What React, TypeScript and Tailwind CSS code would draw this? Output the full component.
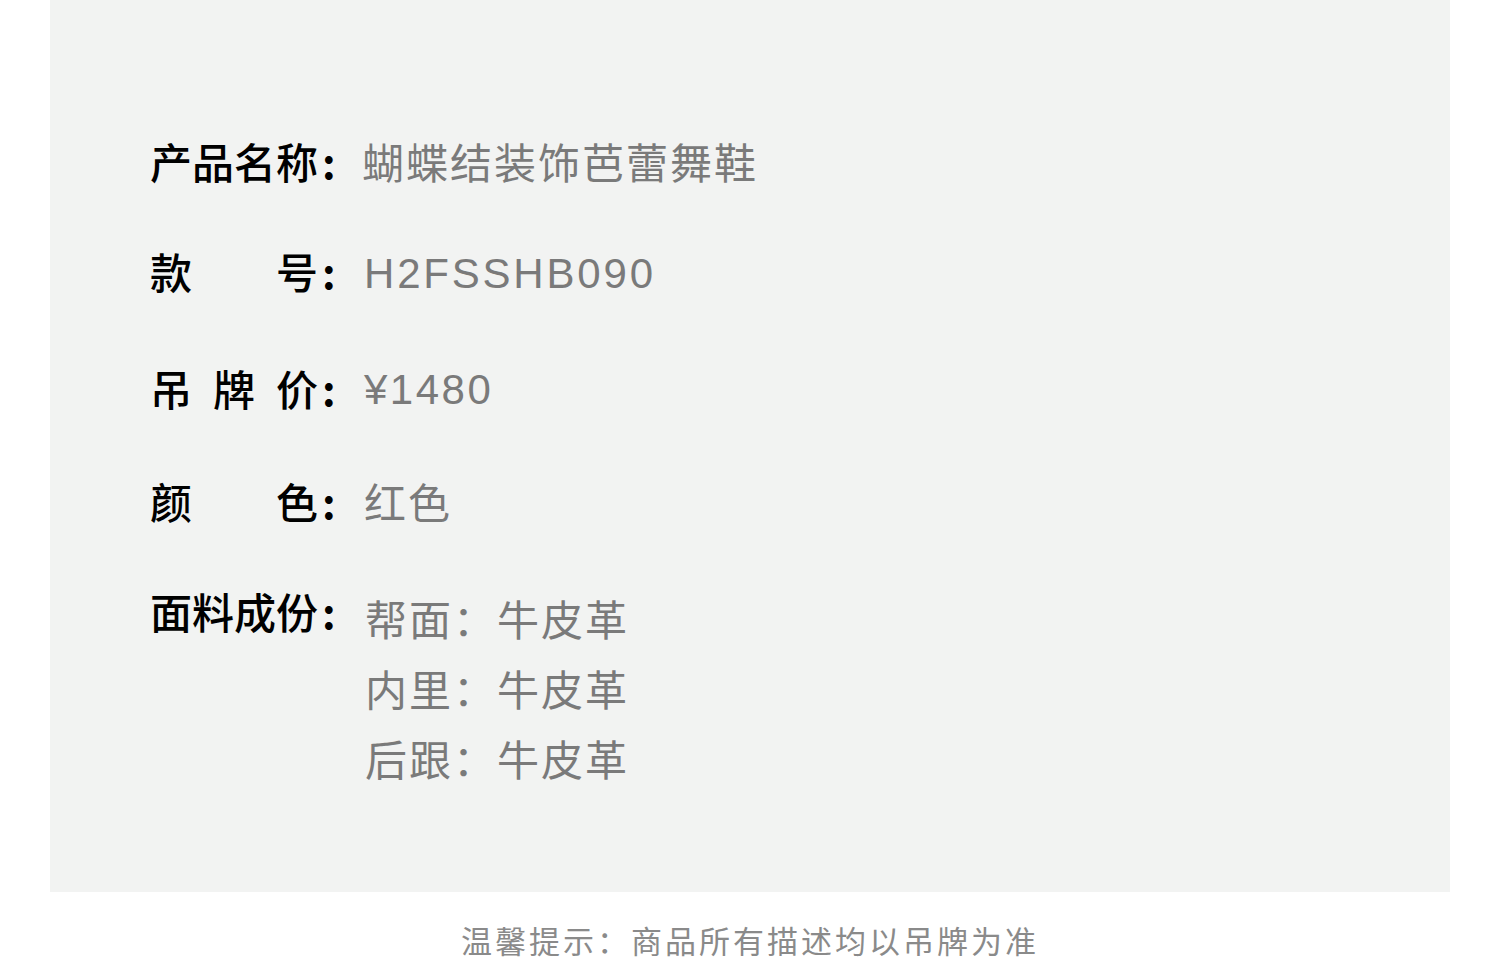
import React from "react";

const font = { fontFamily: '"Noto Sans CJK SC", "Noto Sans", sans-serif' };
const valFont = { fontFamily: '"Liberation Sans", "Noto Sans CJK SC", sans-serif' };

function Label({ text }: { text: string }) {
  return (
    <div className="flex w-[212px] shrink-0 items-start text-[42px] font-medium leading-[60px] text-black">
      <span className="block w-[168px] text-justify [text-align-last:justify]">{text}</span>
      <span className="ml-[4px] font-bold">:</span>
    </div>
  );
}

export default function App() {
  return (
    <div className="min-h-[959px] w-[1500px] bg-white" style={font}>
      <div className="mx-[50px] h-[892px] bg-[#f2f3f2] pl-[100px] pt-[131px]">
        <div className="flex">
          <Label text="产品名称" />
          <div className="text-[42px] leading-[60px] tracking-[2px] text-[#7a7a7a]">蝴蝶结装饰芭蕾舞鞋</div>
        </div>
        <div className="mt-[50px] flex items-start">
          <Label text="款号" />
          <div className="pl-[2px] pt-[3px] text-[42px] leading-[60px] tracking-[2.8px] text-[#7a7a7a]" style={valFont}>H2FSSHB090</div>
        </div>
        <div className="mt-[54px] flex items-start">
          <Label text="吊牌价" />
          <div className="pl-[2px] pt-[2px] text-[42px] leading-[60px] tracking-[2.5px] text-[#7a7a7a]" style={valFont}>¥1480</div>
        </div>
        <div className="mt-[51px] flex">
          <Label text="颜色" />
          <div className="pl-[2px] text-[42px] leading-[60px] tracking-[2px] text-[#7a7a7a]">红色</div>
        </div>
        <div className="mt-[50px] flex">
          <Label text="面料成份" />
          <div className="pl-[3px] pt-[2px] text-[42px] leading-[70px] tracking-[2px] text-[#7a7a7a]">
            <div>帮面：牛皮革</div>
            <div>内里：牛皮革</div>
            <div>后跟：牛皮革</div>
          </div>
        </div>
      </div>
      <div className="mt-[28px] text-center text-[31px] leading-[40px] tracking-[3px] text-[#8a8a8a]">
        温馨提示：商品所有描述均以吊牌为准
      </div>
    </div>
  );
}
